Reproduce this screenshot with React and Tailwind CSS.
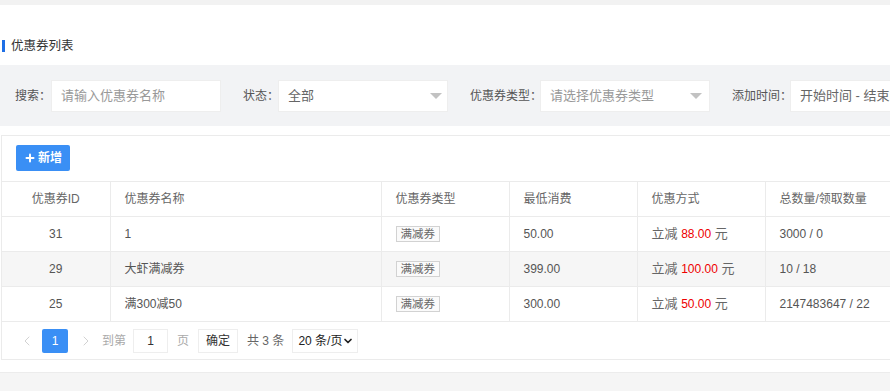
import { ChevronLeft, ChevronRight, ChevronDown, Plus } from "lucide-react";

const font = { fontFamily: '"Liberation Sans", "Noto Sans CJK SC", sans-serif' };

const rows = [
  { id: 31, name: "1", type: "满减券", min: "50.00", amount: "88.00", count: "3000 / 0" },
  { id: 29, name: "大虾满减券", type: "满减券", min: "399.00", amount: "100.00", count: "10 / 18" },
  { id: 25, name: "满300减50", type: "满减券", min: "300.00", amount: "50.00", count: "2147483647 / 22" }
];

function Caret() {
  return (
    <span className="w-0 h-0 border-l-[6px] border-r-[6px] border-t-[6px] border-l-transparent border-r-transparent border-t-[#c2c2c2]" />
  );
}

function App() {
  return (
    <div className="w-[890px] h-[391px] overflow-hidden bg-white text-[#666]" style={font}>

      <div className="h-[5px] bg-[#f2f2f2]" />

      {/* TITLE */}

      <div className="mt-[31px] h-[20px] flex items-center">
        <span className="ml-[2px] w-[3px] h-[12px] bg-[#1e6fe6]" />
        <span className="ml-[6px] text-[12.5px] text-[#333]">优惠券列表</span>
      </div>

      {/* FILTERS */}

      <div className="mt-[9px] h-[61px] bg-[#f2f3f5] flex items-center whitespace-nowrap text-[12px]">

        <span className="shrink-0 ml-[15px] w-[36px] text-[#555]">搜索：</span>
        <div className="shrink-0 w-[170px] h-[32px] bg-white border border-[#eeeeee] flex items-center pl-[9px] text-[13px] text-[#999]">
          请输入优惠券名称
        </div>

        <span className="shrink-0 ml-[22px] w-[35px] text-[#555]">状态：</span>
        <div className="shrink-0 w-[170px] h-[32px] bg-white border border-[#eeeeee] flex items-center justify-between pl-[9px] pr-[5px] text-[13px] text-[#666]">
          全部
          <Caret />
        </div>

        <span className="shrink-0 ml-[22px] w-[70px] text-[#555]">优惠券类型：</span>
        <div className="shrink-0 w-[170px] h-[32px] bg-white border border-[#eeeeee] flex items-center justify-between pl-[9px] pr-[7px] text-[13px] text-[#999]">
          请选择优惠券类型
          <Caret />
        </div>

        <span className="shrink-0 ml-[22px] w-[58px] text-[#555]">添加时间：</span>
        <div className="shrink-0 w-[170px] h-[32px] bg-white border border-[#eeeeee] flex items-center pl-[9px] text-[13px] text-[#666]">
          开始时间 - 结束时间
        </div>

      </div>

      {/* CARD */}

      <div className="mt-[9px] ml-[1px] w-[900px] border border-[#ebebeb] bg-white">

        <div className="pt-[9px] pb-[10px] pl-[14px]">
          <button className="h-[26px] w-[54px] rounded-[2px] bg-[#3a8ff5] text-white text-[12px] font-bold flex items-center justify-center gap-[2px]">
            <Plus size={12} strokeWidth={4} />
            新增
          </button>
        </div>

        <table className="w-full border-collapse text-[12px] table-fixed">
          <colgroup>
            <col className="w-[108px]" />
            <col className="w-[271px]" />
            <col className="w-[128px]" />
            <col className="w-[128px]" />
            <col className="w-[128px]" />
            <col />
          </colgroup>
          <thead>
            <tr className="h-[35px] border-t border-b border-[#ebebeb] text-[#666]">
              <th className="font-normal text-center border-r border-[#ebebeb]">优惠券ID</th>
              <th className="font-normal text-left pl-[14px] border-r border-[#ebebeb]">优惠券名称</th>
              <th className="font-normal text-left pl-[14px] border-r border-[#ebebeb]">优惠券类型</th>
              <th className="font-normal text-left pl-[14px] border-r border-[#ebebeb]">最低消费</th>
              <th className="font-normal text-left pl-[14px] border-r border-[#ebebeb]">优惠方式</th>
              <th className="font-normal text-left pl-[14px]">总数量/领取数量</th>
            </tr>
          </thead>
          <tbody>
            {rows.map((item, index) => (
              <tr
                key={item.id}
                className={
                  index === 1
                    ? "h-[35px] border-b border-[#ebebeb] bg-[#f6f6f6] text-[#555]"
                    : "h-[35px] border-b border-[#ebebeb] text-[#555]"
                }
              >
                <td className="text-center border-r border-[#ebebeb]">{item.id}</td>
                <td className="pl-[14px] border-r border-[#ebebeb]">{item.name}</td>
                <td className="pl-[14px] border-r border-[#ebebeb]">
                  <span className="inline-block px-[4px] h-[16px] leading-[14px] border border-[#d2d2d2] bg-[#fafafa] text-[#666] text-[11.5px]">
                    {item.type}
                  </span>
                </td>
                <td className="pl-[14px] border-r border-[#ebebeb]">{item.min}</td>
                <td className="pl-[14px] border-r border-[#ebebeb] text-[13px] text-[#666]">
                  立减 <span className="text-[#ee0000] text-[12px]">{item.amount}</span> 元
                </td>
                <td className="pl-[14px]">{item.count}</td>
              </tr>
            ))}
          </tbody>
        </table>

        {/* PAGINATION */}

        <div className="h-[37px] flex items-center text-[12px] whitespace-nowrap">
          <ChevronLeft size={16} strokeWidth={1.5} className="ml-[17px] text-[#d2d2d2]" />
          <span className="ml-[7px] w-[26px] h-[24px] rounded-[2px] bg-[#3a8ff5] text-white flex items-center justify-center">1</span>
          <ChevronRight size={16} strokeWidth={1.5} className="ml-[10px] text-[#d2d2d2]" />
          <span className="ml-[8px] text-[#aaa]">到第</span>
          <span className="ml-[7px] w-[35px] h-[24px] border border-[#eeeeee] flex items-center justify-center text-[#333]">1</span>
          <span className="ml-[9px] text-[#aaa]">页</span>
          <span className="ml-[9px] w-[40px] h-[24px] border border-[#eeeeee] flex items-center justify-center text-[#333]">确定</span>
          <span className="ml-[9px] text-[#666]">共 3 条</span>
          <span className="ml-[8px] w-[66px] h-[24px] border border-[#eeeeee] flex items-center justify-between pl-[5px] pr-[4px] text-[#222]">
            20 条/页
            <ChevronDown size={12} strokeWidth={3.5} className="shrink-0 text-[#222]" />
          </span>
        </div>

      </div>

      <div className="mt-[12px] h-[20px] bg-[#f5f5f5] border-t border-[#ececec]" />

    </div>
  );
}

export default App;
